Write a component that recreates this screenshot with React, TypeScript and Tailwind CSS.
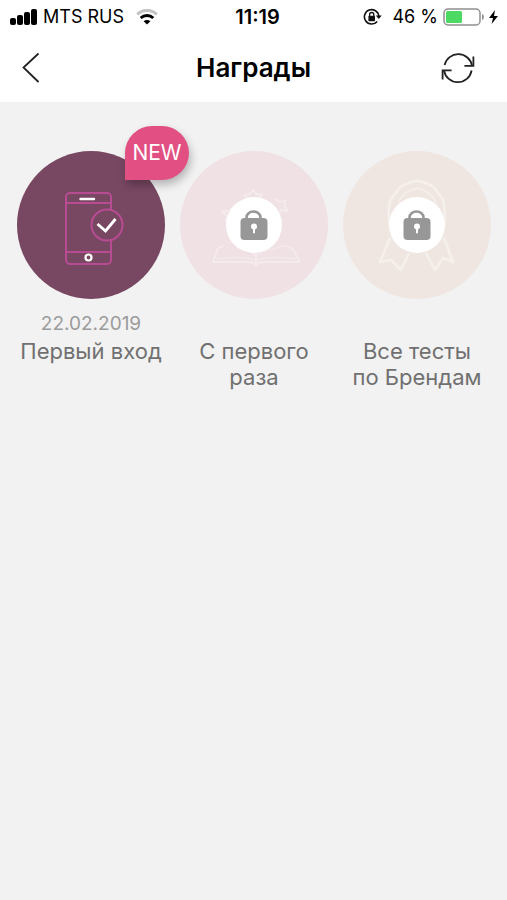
import type { ReactNode } from "react";

function StatusBar() {
  return (
    <div className="grid grid-cols-[1fr_auto_1fr] items-center h-[34px] pl-[10px] pr-2 text-[18px] leading-[22px]">
      <div className="flex items-center gap-[6px]">
        <svg width="27" height="16" viewBox="0 0 27 16" fill="#000">
          <rect x="0" y="9" width="6" height="7" rx="2" />
          <rect x="7" y="6" width="6" height="10" rx="2" />
          <rect x="14" y="3" width="6" height="13" rx="2" />
          <rect x="21" y="0" width="6" height="16" rx="2" />
        </svg>
        <span className="whitespace-nowrap">MTS RUS</span>
        <svg className="ml-[6px]" width="22" height="16" viewBox="0 0 22 16" fill="none">
          <path d="M1.2 5.3C6.8 0.2 15.2 0.2 20.8 5.3" stroke="#c4c4c4" strokeWidth="3" />
          <path d="M4.7 9C8.3 5.7 13.7 5.7 17.3 9" stroke="#000" strokeWidth="3" />
          <path d="M7.6 12.2C9.6 10.5 12.4 10.5 14.4 12.2L11 15.6Z" fill="#000" />
        </svg>
      </div>
      <span className="font-semibold text-[20px] pl-[6px]">11:19</span>
      <div className="flex items-center justify-end">
        <svg className="mr-[10px]" width="19" height="18" viewBox="0 0 19 18" fill="none">
          <path d="M14.2 13.4A7.2 7.2 0 1 1 15.8 8.2" stroke="#111" strokeWidth="1.6" />
          <path d="M12.8 7.4H18.8L15.8 11Z" fill="#111" />
          <rect x="5.4" y="7.8" width="6.600" height="5.4" rx="0.8" fill="#111" />
          <path d="M6.6 8V6.6A2.1 2.1 0 0 1 10.8 6.6V8" stroke="#111" strokeWidth="1.3" />
        </svg>
        <span className="whitespace-nowrap mr-[5px]">46 %</span>
        <svg width="56" height="18" viewBox="0 0 56 18">
          <rect x="1" y="1" width="36" height="16" rx="4" fill="#fff" stroke="#8f8f8f" strokeWidth="1.5" />
          <rect x="3" y="3" width="16" height="12" rx="1.5" fill="#4cd964" />
          <path d="M39 6C41.5 6.6 41.5 11.4 39 12Z" fill="#8f8f8f" />
          <path d="M52 2L46 10H50L48.6 16L55 8H51Z" fill="#000" />
        </svg>
      </div>
    </div>
  );
}

function Header() {
  return (
    <header className="bg-white">
      <StatusBar />
      <div className="grid grid-cols-[1fr_auto_1fr] items-center h-[68px] pl-[22px] pr-[22px]">
        <button type="button" aria-label="Назад" className="w-11 h-11 flex items-center">
          <svg width="18" height="32" viewBox="0 0 18 32" fill="none">
            <path d="M16.5 1.5L1.5 15.5L16.5 30" stroke="#222" strokeWidth="1.8" />
          </svg>
        </button>
        <h1 className="text-[26px] leading-[32px] font-semibold">Награды</h1>
        <button
          type="button"
          aria-label="Обновить"
          className="justify-self-end w-[54px] h-11 flex items-center justify-center"
        >
          <svg width="34" height="32" viewBox="0 0 34 32" fill="none" stroke="#222" strokeWidth="1.8">
            <path d="M3.6 13A14 14 0 0 1 31 13.6" />
            <path d="M32.4 4.6V13.8H23.4" />
            <path d="M30.6 18.5A14 14 0 0 1 3 18.5" />
            <path d="M1.6 27.6V18.4H10.6" />
          </svg>
        </button>
      </div>
    </header>
  );
}

function PhoneArt() {
  return (
    <svg viewBox="0 0 148 148" className="w-full h-full" fill="none">
      <g stroke="#b84c93" strokeWidth="2">
        <rect x="49" y="42" width="45" height="71" rx="4" />
        <path d="M49 52H94M49 101H94" />
        <circle cx="90" cy="74" r="15.5" fill="#784762" />
      </g>
      <g stroke="#fff">
        <path d="M63.5 48H77" strokeWidth="2.4" strokeLinecap="round" />
        <circle cx="71.5" cy="106.5" r="3" strokeWidth="2.2" />
        <path d="M80.5 73L88.5 80L98.5 68" strokeWidth="2.8" />
      </g>
    </svg>
  );
}

function Lock() {
  return (
    <>
      <circle cx="74" cy="74" r="28" fill="#fff" />
      <path d="M66.5 68V66.5A7 6 0 0 1 80.5 66.5V68" stroke="#979797" strokeWidth="2.6" />
      <rect x="60.5" y="67" width="27" height="22" rx="4" fill="#979797" />
      <circle cx="74" cy="75.5" r="3" fill="#fff" />
      <path d="M74 76V81.5" stroke="#fff" strokeWidth="2" strokeLinecap="round" />
    </>
  );
}

function BookArt() {
  return (
    <svg viewBox="0 0 148 148" className="w-full h-full" fill="none">
      <g stroke="#f5ebed" strokeWidth="1.8" strokeLinejoin="round">
        <path d="M38 97L33 111H69Q74 111 76 115Q78 111 83 111H120L112 97" />
        <path d="M38 97L44 95M112 97L107 95" />
        <path d="M76 110Q67 104 37 108M76 110Q85 104 116 108" strokeWidth="1.2" />
        <path d="M48 92Q54 89 60 96Q70 99 76 106Q84 98 94 98Q102 94 107 95" strokeWidth="1.2" />
        <path d="M76 100V115" />
        <path d="M73 39L76 43L82 44L78 48H68L64 44L70 43Z" />
        <path d="M95 48L100 51L106 49L104 55L108 60L101 59L98 64" />
        <path d="M54 55L49 60L42 61L47 65L46 71" />
      </g>
      <Lock />
    </svg>
  );
}

function RibbonArt() {
  return (
    <svg viewBox="0 0 148 148" className="w-full h-full" fill="none">
      <g stroke="#f6f0ed" strokeWidth="2.6" strokeLinejoin="round">
        <path d="M47 75Q45 65 46 57Q46 48 52 43Q57 34 66 32Q74 28 82 32Q91 34 95 42Q102 48 101 57Q103 65 101 75" />
        <path d="M55 52Q60 40 74 37Q88 40 93 52" strokeWidth="1.4" />
        <path d="M47 87L37 111L48 109L58 119L66 102" />
        <path d="M101 87L110 111L100 107L92 119L83 102" />
      </g>
      <Lock />
    </svg>
  );
}

type AwardProps = {
  title: string;
  color: string;
  art: ReactNode;
  date?: string;
  isNew?: boolean;
};

function Award({ title, color, art, date, isNew }: AwardProps) {
  return (
    <li className="flex flex-col items-center text-center">
      <div className={`relative w-full aspect-square rounded-full ${color}`}>
        {art}
        {isNew && (
          <span className="absolute -top-[25px] -right-6 w-16 h-[54px] flex items-center justify-center rounded-[27px] rounded-bl-none bg-[#e14f83] text-white text-[21px] shadow-[2px_5px_8px_rgba(0,0,0,0.25)]">
            NEW
          </span>
        )}
      </div>
      <p className="mt-3 h-[27px] text-[19px] leading-[26px] text-[#9b9b9b]">{date}</p>
      <h2 className="text-[22px] leading-[26px] text-[#707070]">{title}</h2>
    </li>
  );
}

function App() {
  return (
    <div className="min-h-screen bg-[#f2f2f2] text-black font-['Inter','Liberation_Sans',sans-serif]">
      <Header />
      <main className="pl-[17px] pr-4 pt-[49px]">
        <ul className="grid grid-cols-3 gap-[15px]">
          <Award
            title="Первый вход"
            color="bg-[#784762]"
            art={<PhoneArt />}
            date="22.02.2019"
            isNew
          />
          <Award title="С первого раза" color="bg-[#efe1e4]" art={<BookArt />} />
          <Award title={"Все тесты по\u00a0Брендам"} color="bg-[#f0e6e1]" art={<RibbonArt />} />
        </ul>
      </main>
    </div>
  );
}

export default App;
